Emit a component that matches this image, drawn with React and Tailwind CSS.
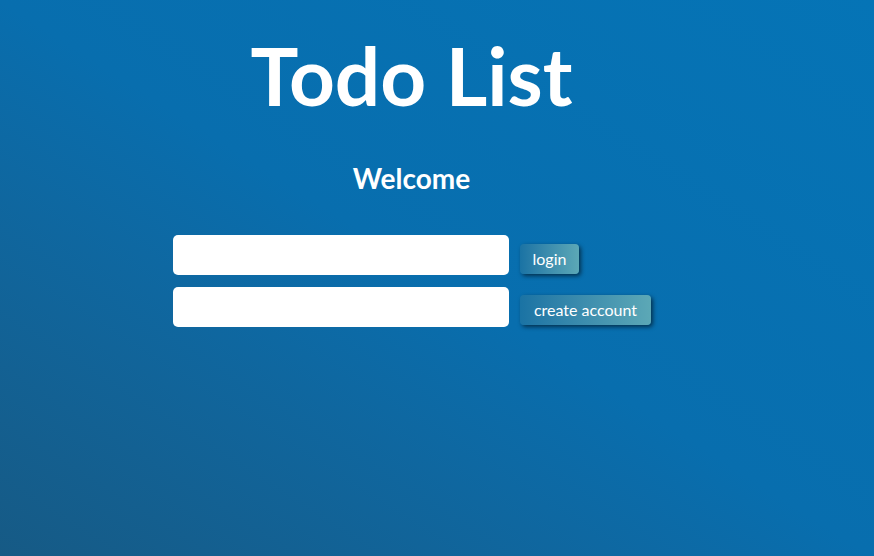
export default function App() {
  return (
    <div
      className="min-h-[556px] w-full bg-linear-to-tr from-[#165a85] via-[#086eae] to-[#0574b6] text-white"
      style={{ fontFamily: '"Comic Sans MS", Lato, "DejaVu Sans", sans-serif' }}
    >
      <div className="w-[823px] text-center pt-[35px]">
        <h1 className="text-[80px] font-bold leading-none">Todo List</h1>
        <h2 className="mt-[49px] text-[28px] font-bold leading-none">Welcome</h2>
      </div>

      {/* login form */}
      <div className="mt-[43px] pl-[173px] flex flex-col gap-[12px]">
        <div className="flex items-end gap-[11px]">
          <input className="w-[336px] h-[40px] rounded-[5px] bg-white outline-none px-2 text-black" />
          <button className="mb-[1px] w-[59px] h-[30px] rounded-[4px] bg-linear-to-r from-[#1a73a4] to-[#5ca8b6] text-[16px] shadow-[2px_2px_4px_rgba(0,0,0,0.55)]">
            login
          </button>
        </div>
        <div className="flex items-end gap-[11px]">
          <input className="w-[336px] h-[40px] rounded-[5px] bg-white outline-none px-2 text-black" />
          <button className="mb-[2px] w-[131px] h-[30px] rounded-[4px] bg-linear-to-r from-[#1a73a4] to-[#5ca8b6] text-[16px] shadow-[2px_2px_4px_rgba(0,0,0,0.55)]">
            create account
          </button>
        </div>
      </div>
    </div>
  );
}
